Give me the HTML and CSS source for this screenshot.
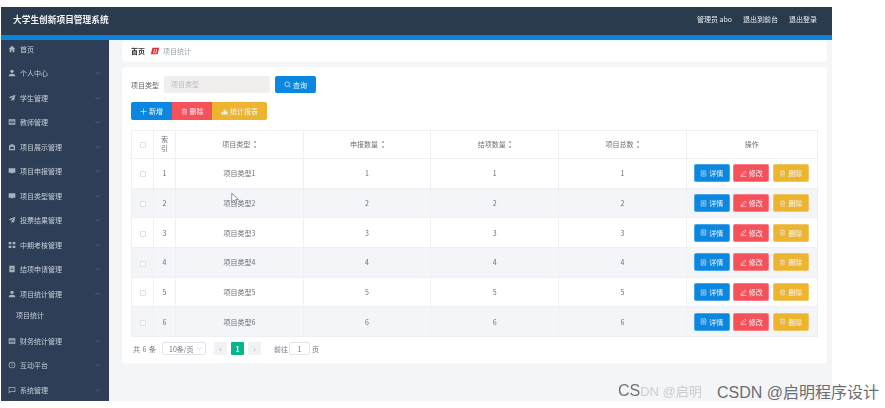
FILE: index.html
```html
<!DOCTYPE html>
<html lang="zh">
<head>
<meta charset="utf-8">
<title>大学生创新项目管理系统</title>
<link rel="stylesheet" href="styles.css">
</head>
<body>
<svg class="defs" width="0" height="0">
  <symbol id="i-home" viewBox="0 0 12 12"><path d="M6 1 1 6h1.500v5H5V8h2v3h2.500V6H11z"/></symbol>
  <symbol id="i-user" viewBox="0 0 12 12"><circle cx="6" cy="3.500" r="2.500"/><path d="M1 11c0-3 2-4 5-4s5 1 5 4z"/></symbol>
  <symbol id="i-send" viewBox="0 0 12 12"><path d="M11 1 1 5l3 1.500L9 3 5 7.500V11l2-2.500L9 10z"/></symbol>
  <symbol id="i-table" viewBox="0 0 12 12"><path d="M1 2h10v8H1zM2 4v1.300h8V4zm0 2.500v1.200h8V6.500z" fill-rule="evenodd"/></symbol>
  <symbol id="i-brief" viewBox="0 0 12 12"><path d="M4 2h4v1.500h2.500V11h-9V3.500H4zM3.500 5.500v3.500h5V5.500z" fill-rule="evenodd"/></symbol>
  <symbol id="i-chat" viewBox="0 0 12 12"><path d="M1 2h10v6.500H7.500L6 10 4.500 8.500H1z"/></symbol>
  <symbol id="i-grid" viewBox="0 0 12 12"><path d="M1 1.500h4v3.500H1zM7 1.500h4v3.500H7zM1 7h4v3.500H1zM7 7h4v3.500H7z"/></symbol>
  <symbol id="i-doc" viewBox="0 0 12 12"><path d="M2 1h8v10H2zM4 4v1h4V4zm0 2.500v1h4v-1z" fill-rule="evenodd"/></symbol>
  <symbol id="i-clock" viewBox="0 0 12 12"><path d="M6 1a5 5 0 1 0 0 10A5 5 0 0 0 6 1zm0 1.200a3.800 3.800 0 1 1 0 7.600 3.800 3.800 0 0 1 0-7.600zM5.500 3.500v3l2 1 .4-.8-1.400-.7V3.500z" fill-rule="evenodd"/></symbol>
  <symbol id="i-msg" viewBox="0 0 12 12"><path d="M1 1.500h10v7.500H4L1 11zM2 2.500v6l1.600-.6H10V2.500z" fill-rule="evenodd"/></symbol>
  <symbol id="i-down" viewBox="0 0 12 12"><path d="M2 4l4 4 4-4" fill="none" stroke="currentColor" stroke-width="1"/></symbol>
  <symbol id="i-up" viewBox="0 0 12 12"><path d="M2 8l4-4 4 4" fill="none" stroke="currentColor" stroke-width="1"/></symbol>
  <symbol id="i-search" viewBox="0 0 12 12"><circle cx="5.500" cy="5.500" r="4" fill="none" stroke="currentColor" stroke-width="1.200"/><path d="M8.500 8.500 11 11" stroke="currentColor" stroke-width="1.200"/></symbol>
  <symbol id="i-plus" viewBox="0 0 12 12"><path d="M6 1v10M1 6h10" stroke="currentColor" stroke-width="1.200"/></symbol>
  <symbol id="i-trash" viewBox="0 0 12 12"><path d="M1.500 3h9M4.500 3V1.500h3V3M3 3v7.500h6V3M5 5v3.500M7 5v3.500" fill="none" stroke="currentColor"/></symbol>
  <symbol id="i-chart" viewBox="0 0 12 12"><path d="M1 11V7h3v4zM4.500 11V3h3v8zM8 11V5.500h3V11z"/></symbol>
  <symbol id="i-edit" viewBox="0 0 12 12"><path d="M8.500 1.500 10.500 3.500 4.500 9.500 2 10l.5-2.500zM1 11h10" fill="none" stroke="currentColor"/></symbol>
  <symbol id="i-detail" viewBox="0 0 12 12"><path d="M2 1.500h8v9H2zM4 4h4M4 6h4M4 8h4" fill="none" stroke="currentColor"/></symbol>
  <symbol id="i-swirl" viewBox="0 0 12 12"><path d="M3 2h8L9 10H1zM5 3.500 4 9h1l1-5.500zm2.500 0L6.500 9h1l1-5.500z" fill-rule="evenodd"/></symbol>
</svg>

<div class="app">
  <header class="topbar">
    <div class="brand">大学生创新项目管理系统</div>
    <nav class="topnav">
      <span>管理员 abo</span>
      <span>退出到前台</span>
      <span>退出登录</span>
    </nav>
  </header>
  <div class="body">
    <aside class="sidebar">
      <a class="menu"><svg class="mi"><use href="#i-home"/></svg><span class="ml">首页</span></a>
      <a class="menu"><svg class="mi"><use href="#i-user"/></svg><span class="ml">个人中心</span><svg class="chev"><use href="#i-down"/></svg></a>
      <a class="menu"><svg class="mi"><use href="#i-send"/></svg><span class="ml">学生管理</span><svg class="chev"><use href="#i-down"/></svg></a>
      <a class="menu"><svg class="mi"><use href="#i-table"/></svg><span class="ml">教师管理</span><svg class="chev"><use href="#i-down"/></svg></a>
      <a class="menu"><svg class="mi"><use href="#i-brief"/></svg><span class="ml">项目展示管理</span><svg class="chev"><use href="#i-down"/></svg></a>
      <a class="menu"><svg class="mi"><use href="#i-chat"/></svg><span class="ml">项目申报管理</span><svg class="chev"><use href="#i-down"/></svg></a>
      <a class="menu"><svg class="mi"><use href="#i-chat"/></svg><span class="ml">项目类型管理</span><svg class="chev"><use href="#i-down"/></svg></a>
      <a class="menu"><svg class="mi"><use href="#i-send"/></svg><span class="ml">投票结果管理</span><svg class="chev"><use href="#i-down"/></svg></a>
      <a class="menu"><svg class="mi"><use href="#i-grid"/></svg><span class="ml">中期考核管理</span><svg class="chev"><use href="#i-down"/></svg></a>
      <a class="menu"><svg class="mi"><use href="#i-doc"/></svg><span class="ml">结项申请管理</span><svg class="chev"><use href="#i-down"/></svg></a>
      <a class="menu"><svg class="mi"><use href="#i-user"/></svg><span class="ml">项目统计管理</span><svg class="chev"><use href="#i-up"/></svg></a>
      <a class="submenu">项目统计</a>
      <a class="menu"><svg class="mi"><use href="#i-table"/></svg><span class="ml">财务统计管理</span><svg class="chev"><use href="#i-down"/></svg></a>
      <a class="menu"><svg class="mi"><use href="#i-clock"/></svg><span class="ml">互动平台</span><svg class="chev"><use href="#i-down"/></svg></a>
      <a class="menu"><svg class="mi"><use href="#i-msg"/></svg><span class="ml">系统管理</span><svg class="chev"><use href="#i-down"/></svg></a>
    </aside>
    <main class="content">
      <div class="crumbs">
        <strong>首页</strong>
        <svg class="crumb-icon"><use href="#i-swirl"/></svg>
        <span>项目统计</span>
      </div>
      <section class="card">
        <form class="search">
          <label>项目类型</label>
          <div class="field">项目类型</div>
          <button type="button" class="btn blue query"><svg class="bi"><use href="#i-search"/></svg>查询</button>
        </form>
        <div class="toolbar">
          <button type="button" class="btn blue add"><svg class="bi"><use href="#i-plus"/></svg>新增</button>
          <button type="button" class="btn red del"><svg class="bi"><use href="#i-trash"/></svg>删除</button>
          <button type="button" class="btn yellow stat"><svg class="bi fillc"><use href="#i-chart"/></svg>统计报表</button>
        </div>
        <table class="grid">
          <colgroup><col class="c1"><col class="c2"><col class="c3"><col class="c3"><col class="c3"><col class="c3"><col class="c7"></colgroup>
          <thead>
            <tr><th><i class="cb"></i></th><th>索引</th><th>项目类型<i class="sort"></i></th><th>申报数量<i class="sort"></i></th><th>结项数量<i class="sort"></i></th><th>项目总数<i class="sort"></i></th><th>操作</th></tr>
          </thead>
          <tbody>
            <tr><td><i class="cb"></i></td><td>1</td><td>项目类型1</td><td>1</td><td>1</td><td>1</td><td><div class="ops"><button type="button" class="btn blue"><svg class="bi"><use href="#i-detail"/></svg>详情</button><button type="button" class="btn red"><svg class="bi"><use href="#i-edit"/></svg>修改</button><button type="button" class="btn yellow"><svg class="bi"><use href="#i-trash"/></svg>删除</button></div></td></tr>
            <tr><td><i class="cb"></i></td><td>2</td><td>项目类型2</td><td>2</td><td>2</td><td>2</td><td><div class="ops"><button type="button" class="btn blue"><svg class="bi"><use href="#i-detail"/></svg>详情</button><button type="button" class="btn red"><svg class="bi"><use href="#i-edit"/></svg>修改</button><button type="button" class="btn yellow"><svg class="bi"><use href="#i-trash"/></svg>删除</button></div></td></tr>
            <tr><td><i class="cb"></i></td><td>3</td><td>项目类型3</td><td>3</td><td>3</td><td>3</td><td><div class="ops"><button type="button" class="btn blue"><svg class="bi"><use href="#i-detail"/></svg>详情</button><button type="button" class="btn red"><svg class="bi"><use href="#i-edit"/></svg>修改</button><button type="button" class="btn yellow"><svg class="bi"><use href="#i-trash"/></svg>删除</button></div></td></tr>
            <tr><td><i class="cb"></i></td><td>4</td><td>项目类型4</td><td>4</td><td>4</td><td>4</td><td><div class="ops"><button type="button" class="btn blue"><svg class="bi"><use href="#i-detail"/></svg>详情</button><button type="button" class="btn red"><svg class="bi"><use href="#i-edit"/></svg>修改</button><button type="button" class="btn yellow"><svg class="bi"><use href="#i-trash"/></svg>删除</button></div></td></tr>
            <tr><td><i class="cb"></i></td><td>5</td><td>项目类型5</td><td>5</td><td>5</td><td>5</td><td><div class="ops"><button type="button" class="btn blue"><svg class="bi"><use href="#i-detail"/></svg>详情</button><button type="button" class="btn red"><svg class="bi"><use href="#i-edit"/></svg>修改</button><button type="button" class="btn yellow"><svg class="bi"><use href="#i-trash"/></svg>删除</button></div></td></tr>
            <tr><td><i class="cb"></i></td><td>6</td><td>项目类型6</td><td>6</td><td>6</td><td>6</td><td><div class="ops"><button type="button" class="btn blue"><svg class="bi"><use href="#i-detail"/></svg>详情</button><button type="button" class="btn red"><svg class="bi"><use href="#i-edit"/></svg>修改</button><button type="button" class="btn yellow"><svg class="bi"><use href="#i-trash"/></svg>删除</button></div></td></tr>
          </tbody>
        </table>
        <div class="pager">
          <span class="total">共 6 条</span>
          <div class="size">10条/页<svg class="size-chev"><use href="#i-down"/></svg></div>
          <span class="pg arrow">‹</span>
          <span class="pg on">1</span>
          <span class="pg arrow">›</span>
          <span class="goto">前往</span>
          <span class="num">1</span>
          <span class="unit">页</span>
        </div>
      </section>
    </main>
  </div>
</div>

<svg class="cursor" viewBox="0 0 12 16"><path d="M1 1v12l3-3 2 5 2-1-2-4.500h4z" fill="#fff" stroke="#66707c"/></svg>
<div class="ghost">CS<span class="smear">DN @启明</span></div>
<div class="mark">CSDN @启明程序设计</div>
</body>
</html>
```

FILE: styles.css
```css
* { box-sizing: border-box; }
html, body { margin: 0; padding: 0; }
body {
  width: 885px;
  height: 408px;
  background: #fff;
  overflow: hidden;
  position: relative;
  font-family: "Noto Sans CJK SC", "Liberation Sans", sans-serif;
  color: #606266;
  font-size: 7px;
}
.defs { position: absolute; }
.app {
  width: 831px;
  height: 394px;
  margin: 7px 0 0 1px;
  display: flex;
  flex-direction: column;
  overflow: hidden;
  filter: blur(0.6px);
}
.topbar {
  flex: 0 0 33px;
  background: #2b3b4e;
  border-bottom: 5px solid #0a84dc;
  display: flex;
  align-items: center;
  justify-content: space-between;
  padding: 0 15px 4px 12px;
  color: #e9edf2;
}
.brand { font-size: 8.700px; font-weight: 700; color: #f0f2f5; }
.topnav { display: flex; gap: 11px; font-size: 7px; }
.body { flex: 1; display: flex; min-height: 0; }
.sidebar {
  flex: 0 0 108px;
  background: #2d3e56;
  color: #c7ced8;
  overflow: hidden;
}
.sidebar > :first-child { margin-top: -3.500px; }
.menu {
  height: 24.500px;
  display: flex;
  align-items: center;
  padding: 0 7px;
}
.mi { width: 8px; height: 8px; fill: #aab3c0; flex: none; margin-right: 4px; }
.ml { flex: 1; font-size: 7px; white-space: nowrap; }
.chev { width: 8px; height: 8px; color: #5f7088; flex: none; }
.submenu {
  display: block;
  height: 22.500px;
  line-height: 19px;
  padding-left: 15px;
  font-size: 7px;
}
.content {
  flex: 1;
  background: #f4f5f7;
  padding: 1px 6px 0 13px;
}
.crumbs {
  height: 21px;
  background: #fff;
  border-radius: 4px;
  display: flex;
  align-items: center;
  padding: 0 0 1px 9px;
  color: #9ba1ab;
  font-size: 7px;
}
.crumbs strong { color: #303133; font-weight: 700; }
.crumb-icon { width: 10px; height: 10px; fill: #e8262b; margin: 0 3px 0 5px; }
.card {
  margin-top: 5px;
  height: 296px;
  background: #fff;
  border-radius: 3px;
  padding: 9px 9px 0;
}
.search { display: flex; align-items: center; height: 17px; }
.search label { width: 33px; font-size: 7px; color: #606266; }
.field {
  width: 106px;
  height: 17px;
  background: #f1eeee;
  border-radius: 2px;
  padding-left: 7px;
  line-height: 16px;
  color: #b8bcc4;
  font-size: 7px;
}
.btn {
  display: inline-flex;
  align-items: center;
  justify-content: center;
  gap: 2px;
  border: 0;
  height: 18px;
  padding: 0;
  color: #f3f6fa;
  font: inherit;
  font-size: 7px;
  border-radius: 2px;
}
.blue { background: #0b87e0; }
.red { background: #f5515a; }
.yellow { background: #ecb42f; }
.bi { width: 7px; height: 7px; color: #e8eef5; fill: none; flex: none; }
.fillc { fill: #f5f5f5; }
.query { width: 41px; height: 17px; margin-left: 5px; }
.toolbar { display: flex; margin: 9px 0 0; height: 18px; }
.add { width: 41px; border-radius: 2px 0 0 2px; }
.del { width: 40px; border-radius: 0; }
.stat { width: 55px; border-radius: 0 2px 2px 0; }
.grid {
  width: 686px;
  margin-top: 9.500px;
  border-collapse: collapse;
  table-layout: fixed;
}
.c1 { width: 22px; }
.c2 { width: 22px; }
.c3 { width: 127.700px; }
.c7 { width: 131px; }
.grid th, .grid td {
  border: 1px solid #eef0f3;
  text-align: center;
  padding: 0;
  font-weight: 400;
  color: #6b7078;
  font-size: 7px;
}
.grid th { height: 28.500px; line-height: 9.500px; }
.grid th:nth-child(2) { padding: 0 4px; }
.grid td { height: 29.700px; }
.grid tbody tr:nth-child(even) td { background: #f3f5f8; }
.cb {
  display: inline-block;
  width: 6px;
  height: 6px;
  border: 1px solid #dcdfe6;
  border-radius: 1px;
  background: #fff;
  vertical-align: middle;
}
.sort {
  display: inline-block;
  width: 3px;
  height: 7px;
  margin-left: 3px;
  vertical-align: middle;
  background:
    linear-gradient(#b4b8bf, #b4b8bf) 50% 0 / 2px 2px no-repeat,
    linear-gradient(#b4b8bf, #b4b8bf) 50% 100% / 2px 2px no-repeat;
}
.ops { display: flex; gap: 3.500px; padding-left: 7px; }
.ops .btn { width: 36px; border: 1px solid rgba(255, 255, 255, .25); }
.pager {
  display: flex;
  align-items: center;
  height: 13px;
  margin-top: 5px;
  padding-left: 2px;
  font-size: 7px;
  color: #70757d;
  word-spacing: 1px;
}
.total { width: 29px; }
.size {
  width: 44px;
  height: 13px;
  border: 1px solid #e2e4e9;
  border-radius: 2px;
  display: flex;
  align-items: center;
  justify-content: space-between;
  padding: 0 2px 0 6px;
}
.size-chev { width: 7px; height: 7px; color: #bfc3ca; }
.pg {
  width: 13px;
  height: 13px;
  margin-left: 4px;
  border-radius: 1px;
  display: flex;
  align-items: center;
  justify-content: center;
  background: #f1f2f4;
  color: #aab0b8;
  font-size: 8px;
}
.size + .pg { margin-left: 8px; }
.pg.on { background: #09b689; color: #fff; font-weight: 700; font-size: 7px; }
.goto { margin-left: 13px; width: 15px; }
.num {
  width: 21px;
  height: 13px;
  border: 1px solid #e2e4e9;
  border-radius: 2px;
  display: flex;
  align-items: center;
  justify-content: center;
}
.unit { margin-left: 2px; }
.cursor {
  position: absolute;
  left: 231px;
  top: 192px;
  width: 9px;
  height: 13px;
}
.mark, .ghost {
  position: absolute;
  white-space: nowrap;
  font-family: "Liberation Sans", "Noto Sans CJK SC", sans-serif;
  font-size: 16px;
  line-height: 18px;
}
.mark { left: 717px; top: 384px; color: #6a6d72; }
.ghost { left: 618px; top: 382px; color: #6f7278; filter: blur(0.4px); }
.smear { color: #c9ccd1; font-size: 13px; }
```
